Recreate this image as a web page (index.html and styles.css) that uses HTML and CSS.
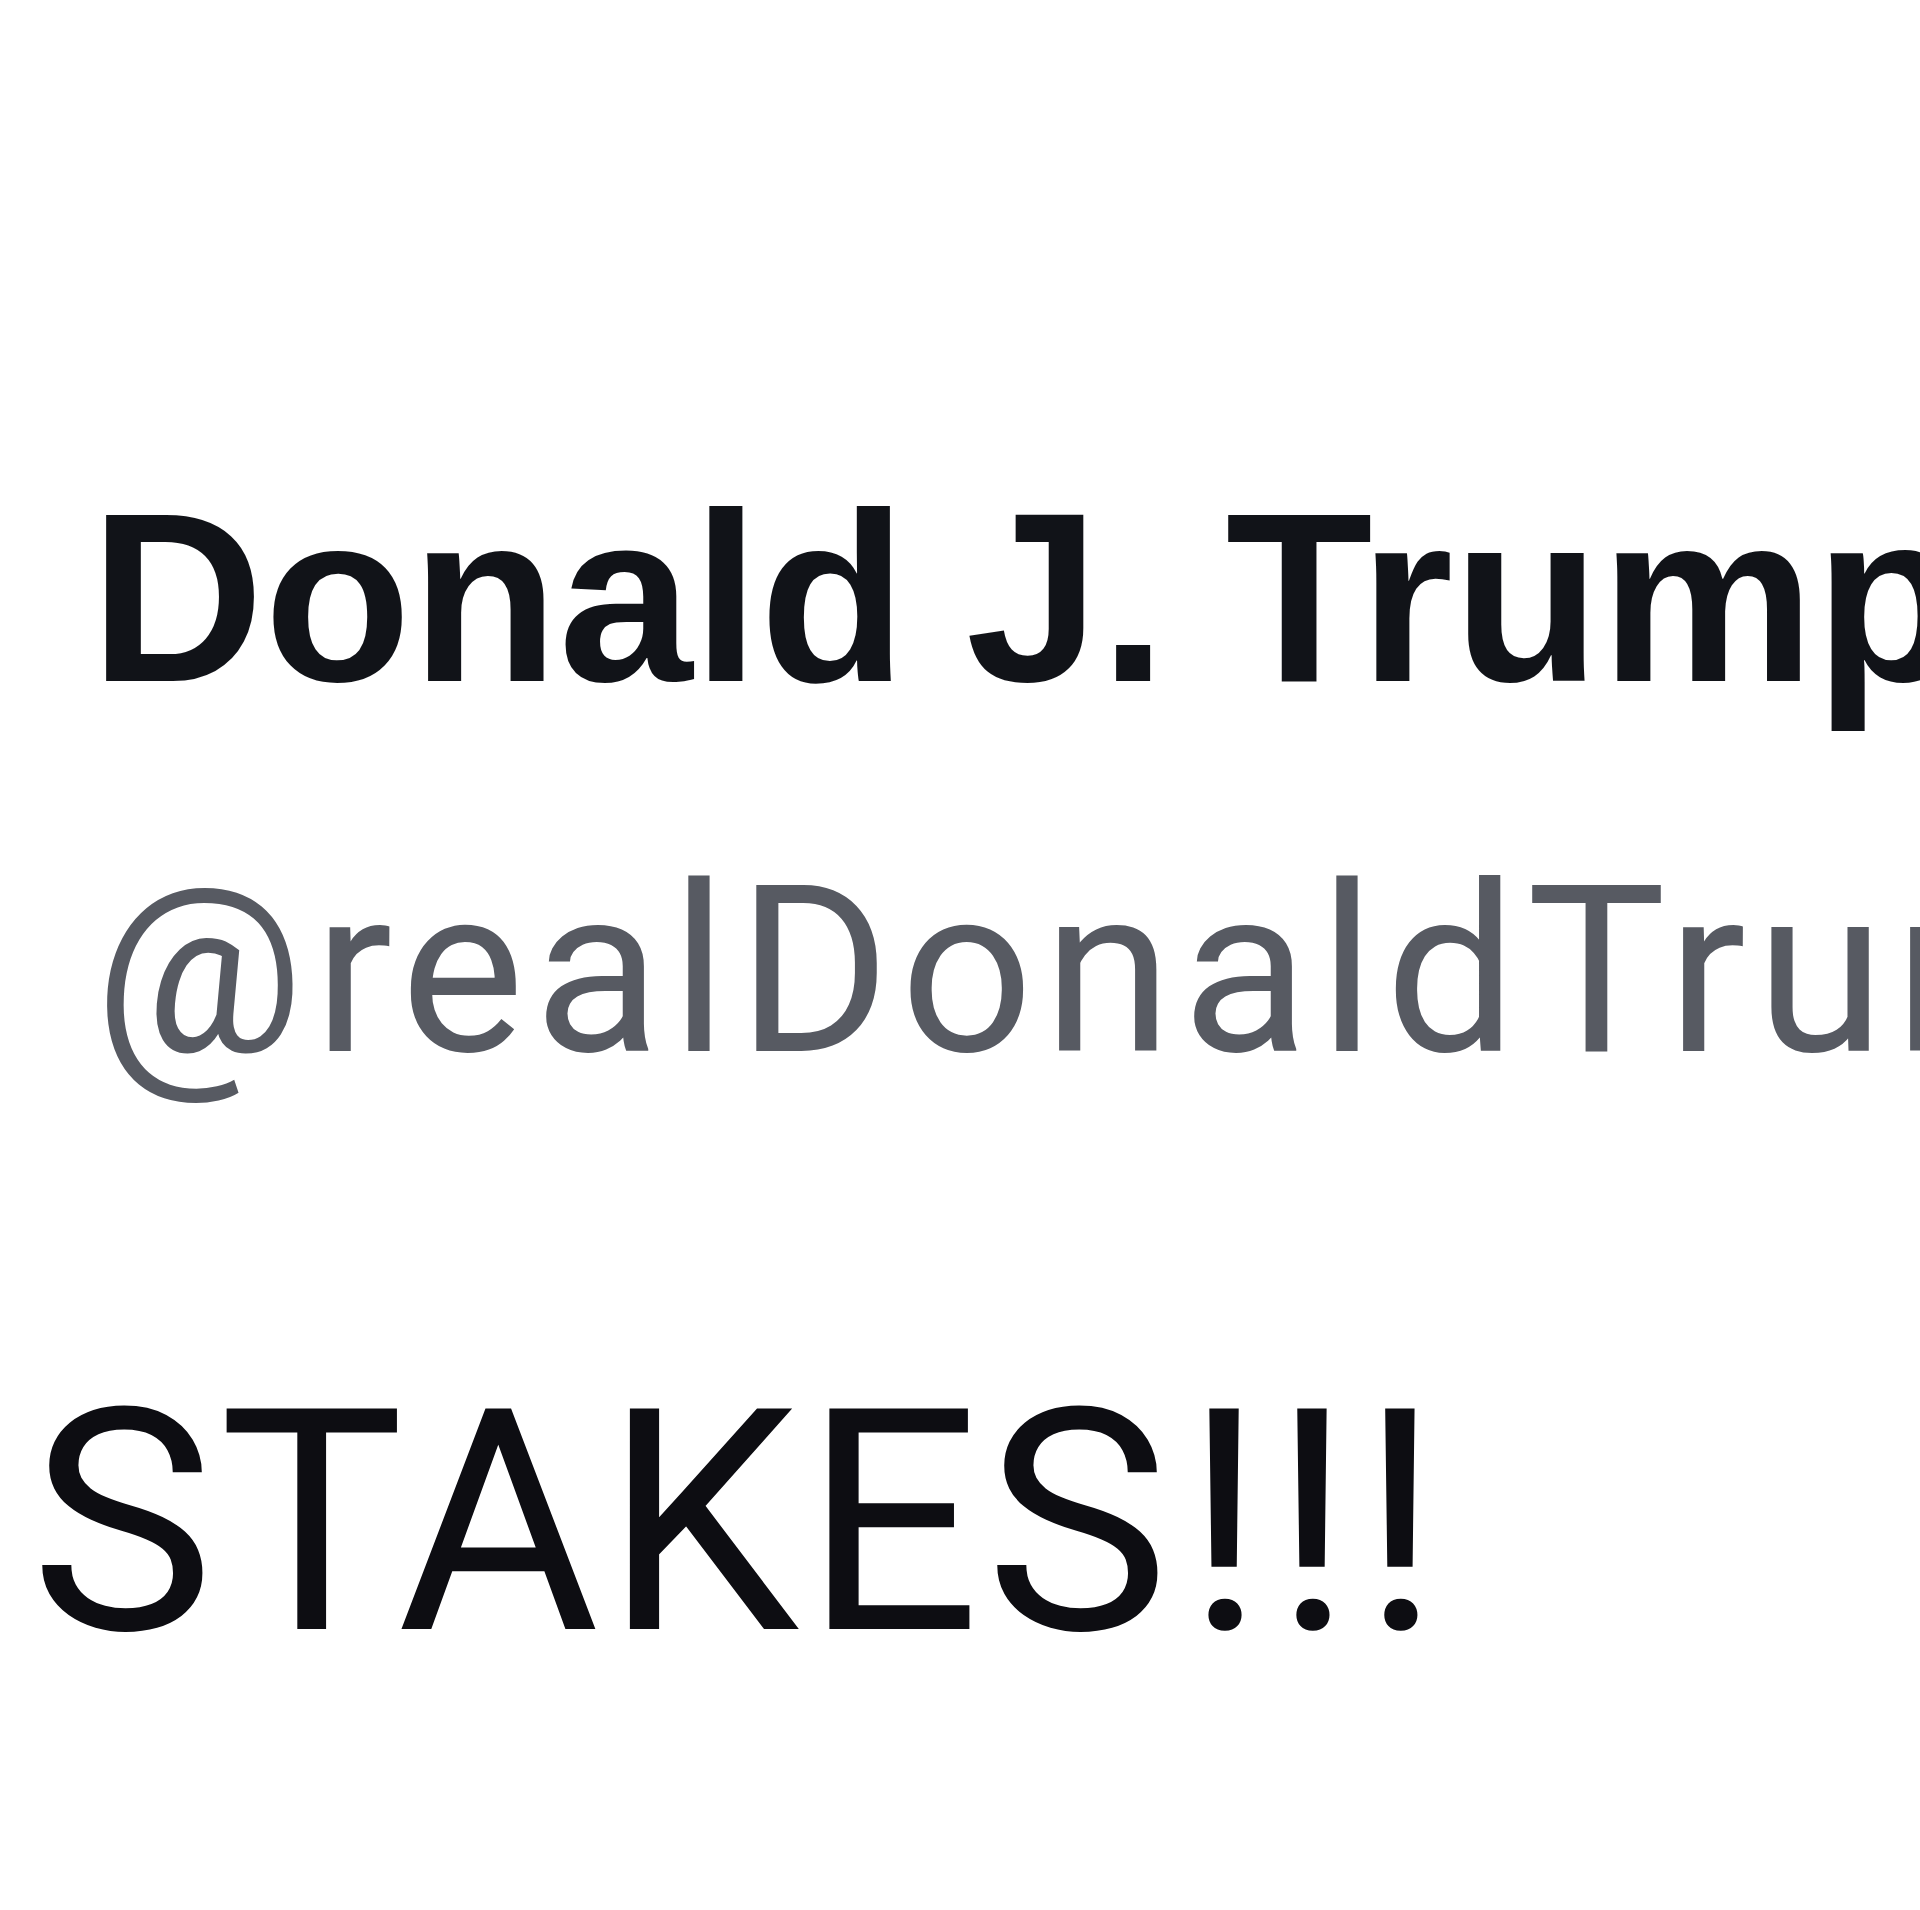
FILE: index.html
```html
<!DOCTYPE html>
<html lang="en">
<head>
<meta charset="utf-8">
<title>Donald J. Trump</title>
<link rel="stylesheet" href="styles.css">
</head>
<body>
<main class="tweet">
  <header class="tweet-author">
    <div class="author-name">Donald J. Trump</div>
    <div class="author-handle">@realDonaldTrump</div>
  </header>
  <p class="tweet-text"><span class="word">STAKES</span><span class="bang">!!!</span></p>
</main>
</body>
</html>
```
FILE: styles.css
```css
html, body {
  margin: 0;
  padding: 0;
  background: #ffffff;
  overflow: hidden;
}

.tweet {
  width: 1920px;
  height: 1910px;
  overflow: hidden;
  display: flex;
  flex-direction: column;
}

.tweet-author {
  display: flex;
  flex-direction: column;
  padding-top: 477px;
}

.author-name {
  font-family: "Liberation Sans", Arial, sans-serif;
  font-weight: 700;
  font-size: 241px;
  line-height: 241px;
  word-spacing: -8px;
  color: #111318;
  white-space: nowrap;
  padding-left: 90px;
}

.author-handle {
  font-family: Roboto, "Liberation Sans", sans-serif;
  font-weight: 400;
  font-size: 234px;
  line-height: 234px;
  letter-spacing: 9.5px;
  color: #575a62;
  white-space: nowrap;
  padding-left: 94px;
  margin-top: 136px;
}

.tweet-text {
  margin: 280px 0 0 0;
  font-family: Roboto, "Liberation Sans", sans-serif;
  font-weight: 400;
  font-size: 310px;
  line-height: 310px;
  color: #0d0d12;
  white-space: nowrap;
  padding-left: 30px;
}

.word {
  letter-spacing: 5px;
}

.bang {
  letter-spacing: 8px;
  margin-left: 10px;
}
```
